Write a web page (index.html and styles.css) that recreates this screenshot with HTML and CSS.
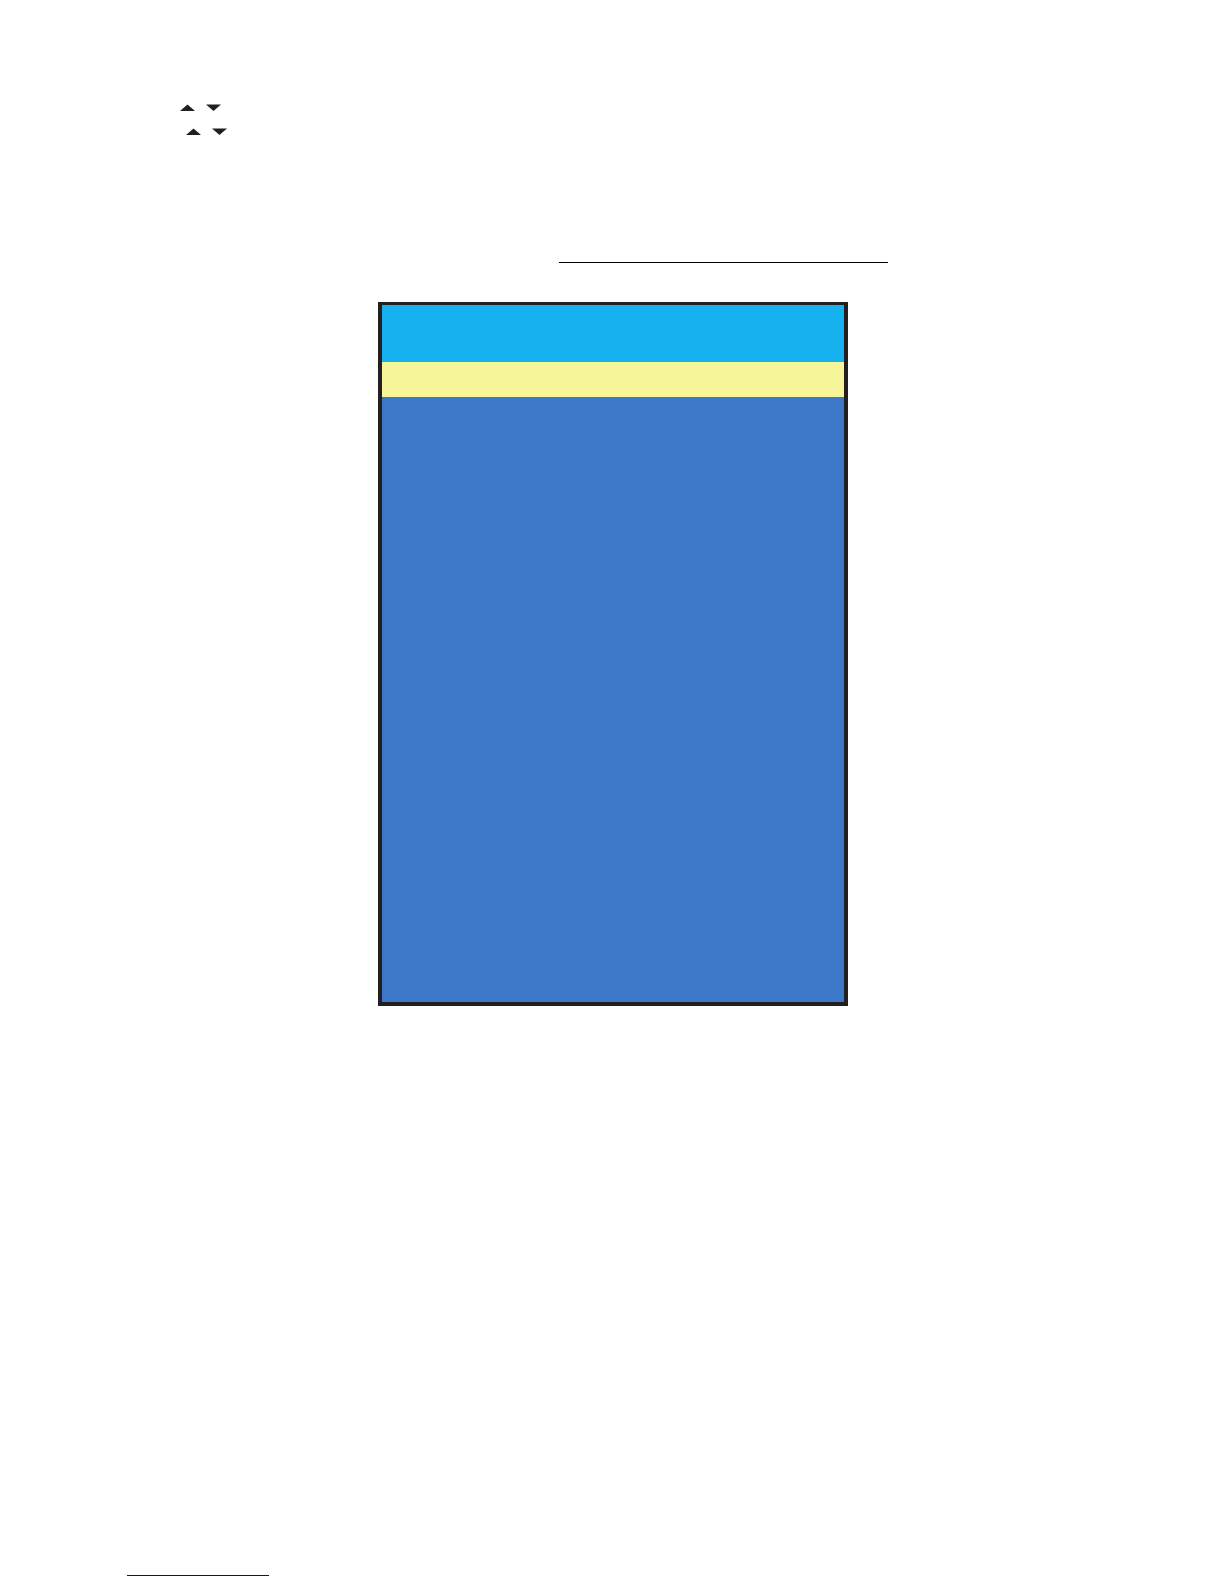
FILE: index.html
```
<!DOCTYPE html>
<html lang="en">
<head>
<meta charset="utf-8">
<meta name="viewport" content="width=device-width, initial-scale=1">
<title>Menu</title>
<link rel="stylesheet" href="styles.css">
</head>
<body>
<main class="page">
  <section class="keys">
    <div class="key-row">
      <svg class="arrow" viewBox="0 0 15 7" aria-hidden="true"><path d="M0 7 7.500 0.500 15 7z"/></svg>
      <svg class="arrow" viewBox="0 0 15 7" aria-hidden="true"><path d="M0 0.500h15L7.500 7z"/></svg>
    </div>
    <div class="key-row key-row-indented">
      <svg class="arrow" viewBox="0 0 15 7" aria-hidden="true"><path d="M0 7 7.500 0.500 15 7z"/></svg>
      <svg class="arrow" viewBox="0 0 15 7" aria-hidden="true"><path d="M0 0.500h15L7.500 7z"/></svg>
    </div>
  </section>
  <hr class="title-rule">
  <section class="menu">
    <div class="menu-header"></div>
    <div class="menu-selected"></div>
    <div class="menu-body"></div>
  </section>
  <hr class="footer-rule">
</main>
</body>
</html>
```
FILE: styles.css
```
* {
  box-sizing: border-box;
}

body {
  margin: 0;
  background: #fff;
  font-family: "Liberation Sans", sans-serif;
}

.page {
  display: flex;
  flex-direction: column;
  min-height: 100vh;
  padding: 104px 0 8px;
}

.keys {
  display: flex;
  flex-direction: column;
  gap: 17px;
  padding-left: 180px;
}

.key-row {
  display: flex;
  gap: 11px;
}

.key-row-indented {
  padding-left: 6px;
}

.arrow {
  display: block;
  width: 15px;
  height: 7px;
  fill: #231f20;
}

.title-rule,
.footer-rule {
  width: 100%;
  height: 1px;
  margin: 0;
  border: 0;
}

.title-rule {
  max-width: 329px;
  margin: 127px 0 39px 559px;
  background: #000;
}

.menu {
  align-self: center;
  width: 100%;
  max-width: 470px;
  margin-left: 2px;
  border: 4px solid #231f20;
  border-top-width: 3px;
}

.menu-header {
  height: 57px;
  background: #16b2f0;
}

.menu-selected {
  height: 35px;
  background: #f6f59a;
}

.menu-body {
  height: 605px;
  background: #3c78c7;
}

.footer-rule {
  max-width: 142px;
  margin: auto 0 0 127px;
  background: #0a0a8c;
}
```
